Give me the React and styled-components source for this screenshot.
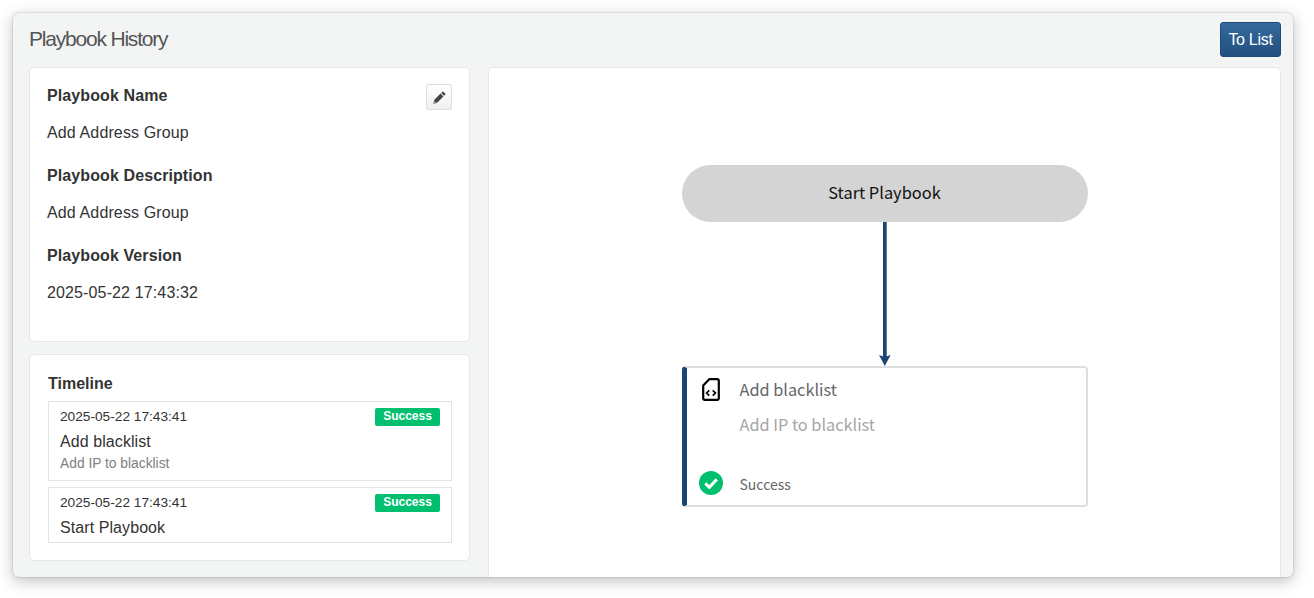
import styled, {createGlobalStyle} from 'styled-components';

const GlobalStyle = createGlobalStyle`
  html, body {
    margin: 0;
    padding: 0;
    height: 598px;
    overflow: hidden;
    background: #fff;
  }
  * {
    box-sizing: border-box;
  }
`;

const Page = styled.div`
  height: 598px;
  padding: 13px 21px 21px 13px;
  font-family: "Liberation Sans", Arial, sans-serif;
  color: #333;
`;

const Panel = styled.div`
  height: 564px;
  display: flex;
  flex-direction: column;
  background: #f3f5f5;
  border-radius: 6px;
  box-shadow: 0 0 2px rgba(0, 0, 0, .25), 0 4px 15px rgba(0, 0, 0, .25);
  padding: 0 12px 0 16px;
  overflow: hidden;
`;

const Header = styled.div`
  height: 54px;
  flex: none;
  display: flex;
  align-items: flex-start;
  justify-content: space-between;
`;

const Title = styled.h1`
  margin: 13px 0 0;
  font-size: 21px;
  line-height: 26px;
  font-weight: 400;
  letter-spacing: -1.2px;
  color: #555;
`;

const ListButton = styled.button`
  margin-top: 9px;
  width: 61px;
  height: 35px;
  padding: 0;
  border: 1px solid #1f4a78;
  border-radius: 3px;
  background: linear-gradient(#336a9e, #234f7f);
  color: #fff;
  font: 16px "Liberation Sans", Arial, sans-serif;
  letter-spacing: -.3px;
`;

const Body = styled.div`
  flex: 1;
  min-height: 0;
  display: flex;
  gap: 18px;
`;

const Side = styled.div`
  width: 441px;
  flex: none;
  display: flex;
  flex-direction: column;
  gap: 12px;
`;

const Card = styled.section`
  background: #fff;
  border: 1px solid #e6e8e8;
  border-radius: 5px;
`;

const InfoCard = styled(Card)`
  position: relative;
  height: 275px;
  padding: 18px 17px 0 17px;
`;

const Label = styled.div`
  font-size: 16px;
  line-height: 20px;
  font-weight: 700;
  letter-spacing: .1px;
  color: #333;
`;

const Value = styled.div`
  margin: 17px 0 23px;
  font-size: 16px;
  line-height: 20px;
  letter-spacing: .13px;
  color: #333;
`;

const EditButton = styled.button`
  position: absolute;
  top: 16px;
  right: 17px;
  width: 26px;
  height: 26px;
  padding: 0;
  display: flex;
  align-items: center;
  justify-content: center;
  background: linear-gradient(#fff, #eef0f2);
  border: 1px solid #dcdfe1;
  border-radius: 2px;
`;

const TimelineCard = styled(Card)`
  height: 207px;
  padding: 20px 17px 0 18px;
`;

const TimelineTitle = styled.div`
  font-size: 16px;
  line-height: 18px;
  font-weight: 700;
  color: #333;
  margin-bottom: 8px;
`;

const TimelineItem = styled.div`
  height: ${({$tall}) => ($tall ? '80px' : '56px')};
  margin-bottom: 6px;
  padding: 6px 11px 0;
  border: 1px solid #e3e5e5;
`;

const ItemTop = styled.div`
  display: flex;
  align-items: flex-start;
  justify-content: space-between;
`;

const ItemTime = styled.span`
  font-size: 13.7px;
  line-height: 18px;
  color: #333;
`;

const Badge = styled.span`
  height: 18px;
  width: 65px;
  border-radius: 2px;
  background: #00bf6f;
  color: #fff;
  font-size: 12px;
  font-weight: 700;
  line-height: 16px;
  text-align: center;
`;

const ItemName = styled.div`
  margin-top: 5px;
  font-size: 16px;
  line-height: 22px;
  letter-spacing: .08px;
  color: #333;
`;

const ItemDesc = styled.div`
  margin-top: 2px;
  font-size: 13.8px;
  line-height: 17px;
  color: #808080;
`;

const Canvas = styled.section`
  flex: 1;
  background: #fff;
  border: 1px solid #e6e8e8;
  border-bottom: 0;
  border-radius: 5px 5px 0 0;
  display: flex;
  flex-direction: column;
  align-items: center;
  padding: 97px 0 0 0;
  font-family: "Noto Sans CJK KR", "Noto Sans", sans-serif;
`;

const StartNode = styled.div`
  width: 406px;
  height: 57px;
  padding-bottom: 3px;
  border-radius: 29px;
  background: #d4d4d4;
  display: flex;
  align-items: center;
  justify-content: center;
  font-size: 16.4px;
  color: #111;
`;

const Arrow = styled.svg`
  display: block;
  flex: none;
`;

const TaskNode = styled.div`
  width: 406px;
  height: 141px;
  background: #fff;
  border: 2px solid #dcdfe1;
  border-left: 5px solid #1c4470;
  border-radius: 4px;
  display: grid;
  grid-template-columns: 53px 1fr;
  grid-template-rows: 42px 28px 1fr;
`;

const IconCell = styled.div`
  display: flex;
  align-items: ${({$end}) => ($end ? 'flex-start' : 'center')};
  justify-content: center;
  padding-right: 5px;
`;

const TaskName = styled.div`
  font-size: 16.3px;
  line-height: 42px;
  color: #666;
`;

const TaskDesc = styled.div`
  grid-column: 2;
  font-size: 16.3px;
  line-height: 28px;
  color: #a6a6a6;
`;

const TaskStatus = styled.div`
  font-size: 14px;
  line-height: 20px;
  padding-top: 36px;
  color: #666;
`;

const StatusCell = styled(IconCell)`
  padding-top: 33px;
`;

const PencilIcon = () => (
    <svg width="13" height="13" viewBox="0 0 13 13">
        <path d="M9.2.9a1 1 0 0 1 1.4 0l1.500 1.500a1 1 0 0 1 0 1.400l-1 1L8.200 1.900z" fill="#444" />
        <path d="M7.500 2.600l2.900 2.900-6.300 6.300-3.700.9.800-3.800z" fill="#444" />
        <path d="M1.300 9.500l2.200 2.200-2.900.7z" fill="#8a8a8a" />
    </svg>
);

const FileCodeIcon = () => (
    <svg width="18" height="23" viewBox="0 0 18 23" fill="none">
        <path d="M7.200 1.200H15.300a1.500 1.500 0 0 1 1.500 1.500v17.600a1.500 1.500 0 0 1-1.500 1.500H2.700a1.500 1.500 0 0 1-1.500-1.500V7.500z"
              stroke="#000" strokeWidth="2.200" strokeLinejoin="round" />
        <path d="M7.300 12.300L4.600 15l2.700 2.700M10.700 12.300l2.700 2.700-2.700 2.700" stroke="#000" strokeWidth="1.700" />
    </svg>
);

const CheckIcon = () => (
    <svg width="24" height="24" viewBox="0 0 24 24">
        <circle cx="12" cy="12" r="12" fill="#00bf6f" />
        <path d="M6.300 12.400l4 4 7.500-8" fill="none" stroke="#fff" strokeWidth="3" />
    </svg>
);

const TIMELINE = [
    {time: '2025-05-22 17:43:41', name: 'Add blacklist', desc: 'Add IP to blacklist'},
    {time: '2025-05-22 17:43:41', name: 'Start Playbook'},
];

const App = () => (
    <Page>
        <GlobalStyle />
        <Panel>
            <Header>
                <Title>Playbook History</Title>
                <ListButton>To List</ListButton>
            </Header>
            <Body>
                <Side>
                    <InfoCard>
                        <EditButton><PencilIcon /></EditButton>
                        <Label>Playbook Name</Label>
                        <Value>Add Address Group</Value>
                        <Label>Playbook Description</Label>
                        <Value>Add Address Group</Value>
                        <Label>Playbook Version</Label>
                        <Value>2025-05-22 17:43:32</Value>
                    </InfoCard>
                    <TimelineCard>
                        <TimelineTitle>Timeline</TimelineTitle>
                        {TIMELINE.map((item) => (
                            <TimelineItem key={item.name} $tall={!!item.desc}>
                                <ItemTop>
                                    <ItemTime>{item.time}</ItemTime>
                                    <Badge>Success</Badge>
                                </ItemTop>
                                <ItemName>{item.name}</ItemName>
                                {item.desc && <ItemDesc>{item.desc}</ItemDesc>}
                            </TimelineItem>
                        ))}
                    </TimelineCard>
                </Side>
                <Canvas>
                    <StartNode>Start Playbook</StartNode>
                    <Arrow width="13" height="144" viewBox="0 0 13 144">
                        <rect x="5" y="0" width="3.700" height="135" fill="#1c4470" />
                        <path d="M1 133l5.800 2 5.800-2-5.800 11z" fill="#1c4470" />
                    </Arrow>
                    <TaskNode>
                        <IconCell><FileCodeIcon /></IconCell>
                        <TaskName>Add blacklist</TaskName>
                        <TaskDesc>Add IP to blacklist</TaskDesc>
                        <StatusCell $end><CheckIcon /></StatusCell>
                        <TaskStatus>Success</TaskStatus>
                    </TaskNode>
                </Canvas>
            </Body>
        </Panel>
    </Page>
);

export default App;
